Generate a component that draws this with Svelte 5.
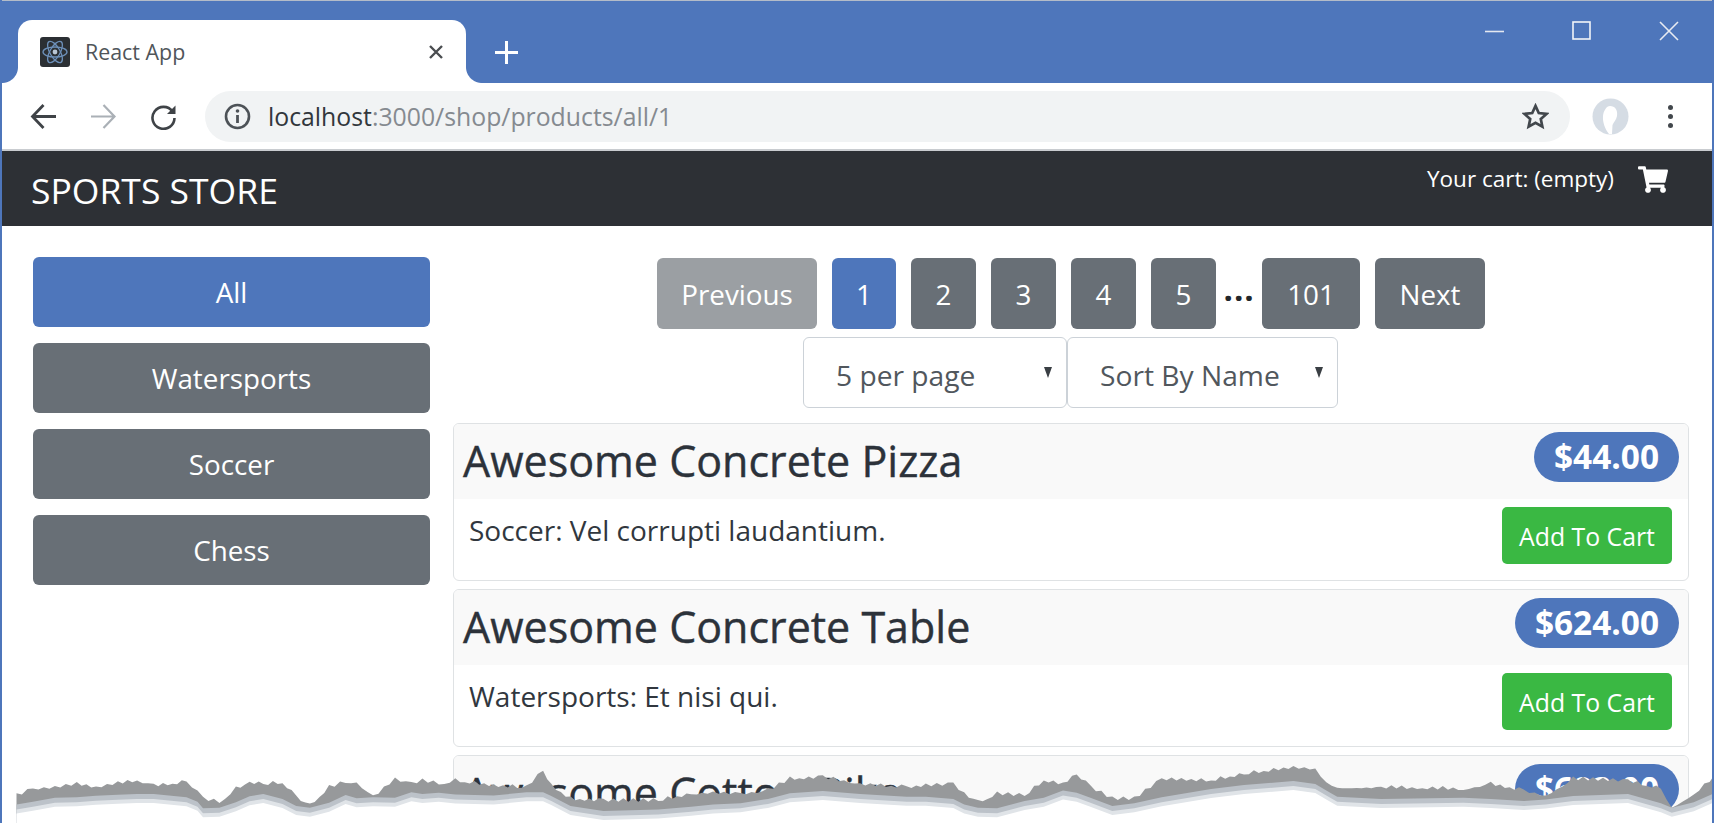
<script>
	const pages = ['1', '2', '3', '4', '5'];
	const categories = ['All', 'Watersports', 'Soccer', 'Chess'];
	const products = [
		{ name: 'Awesome Concrete Pizza', price: '$44.00', text: 'Soccer: Vel corrupti laudantium.' },
		{ name: 'Awesome Concrete Table', price: '$624.00', text: 'Watersports: Et nisi qui.' },
		{ name: 'Awesome Cotton Bike', price: '$683.00', text: 'Chess: Aut quia.' }
	];

	// torn paper edge, traced off the reference
	const left = [[30,230],[60,210],[100,205],[140,195],[175,205],[215,192],[250,185],[280,200],[340,190],[360,215],[370,240],[400,250],[430,210],[455,190],[480,197],[515,190],[540,235],[565,260],[600,205],[630,190],[650,190],[680,235],[720,180],[750,195],[770,185],[800,195],[830,185],[900,200],[960,205],[990,155],[1005,200],[1040,240],[1100,245],[1200,245],[1260,225],[1300,220],[1350,225],[1400,215],[1440,180],[1500,175],[1568,195]];
	const right = [[85,205],[120,200],[170,195],[190,225],[215,250],[250,225],[300,230],[335,185],[370,195],[395,165],[420,205],[460,240],[500,240],[550,180],[640,185],[700,165],[790,145],[830,150],[850,190],[870,205],[950,205],[1100,210],[1150,195],[1210,215],[1250,230],[1300,180],[1400,185],[1460,210],[1480,265],[1520,225],[1568,160]];
	const edge = [
		...left.map(([x, y]) => [x / 1.823, 720 + y / 3]),
		...right.map(([x, y]) => [860 + x / 1.823, 720 + y / 3])
	];

	function smooth(i) {
		const a = edge[Math.max(i - 1, 0)][1];
		const b = edge[Math.min(i + 1, edge.length - 1)][1];
		return (a + edge[i][1] + b) / 3;
	}

	// smoothed lower edge of the shadow
	function lower(offset) {
		const pts = edge.map(([x], i) => `${x.toFixed(1)},${(smooth(i) + offset).toFixed(1)}`);
		const lastX = edge[edge.length - 1][0];
		return `${pts.join(' ')} ${lastX},823 ${edge[0][0]},823`;
	}

	// upper edge with small teeth on it
	function jagged() {
		const pts = [];
		edge.forEach(([x, y], i) => {
			const next = edge[i + 1];
			if (!next) return pts.push(`${x.toFixed(1)},${y.toFixed(1)}`);
			const steps = Math.max(1, Math.round((next[0] - x) / 5));
			for (let s = 0; s < steps; s++) {
				const t = s / steps;
				const px = x + (next[0] - x) * t;
				const tooth = s % 2 ? 0 : Math.abs(Math.sin(px * 12.9)) * 3.5;
				pts.push(`${px.toFixed(1)},${(y + (next[1] - y) * t - tooth).toFixed(1)}`);
			}
		});
		const lastX = edge[edge.length - 1][0];
		return `${pts.join(' ')} ${lastX},823 ${edge[0][0]},823`;
	}
</script>

<div class="window">
	<div class="tabstrip">
		<div class="tab">
			<svg class="favicon" viewBox="0 0 30 30">
				<rect width="30" height="30" rx="3" fill="#2b2f33" />
				<g fill="none" stroke="#6c8fb8" stroke-width="1.3">
					<ellipse cx="15" cy="15" rx="12" ry="5" />
					<ellipse cx="15" cy="15" rx="12" ry="5" transform="rotate(60 15 15)" />
					<ellipse cx="15" cy="15" rx="12" ry="5" transform="rotate(120 15 15)" />
				</g>
				<circle cx="15" cy="15" r="2.4" fill="#b9c6d4" />
			</svg>
			<span class="tab-title">React App</span>
			<svg class="tab-close" viewBox="0 0 16 16"><path d="M2 2l12 12M14 2L2 14" stroke="#4a4d50" stroke-width="2.4" /></svg>
		</div>
		<svg class="newtab" viewBox="0 0 23 23"><path d="M11.5 0v23M0 11.5h23" stroke="#fff" stroke-width="3" /></svg>
		<div class="winctl">
			<svg viewBox="0 0 20 20"><path d="M0 10.5h19" stroke="#e4e8f0" stroke-width="1.6" /></svg>
			<svg viewBox="0 0 20 20"><rect x="1" y="1" width="17" height="17" fill="none" stroke="#f2f4f8" stroke-width="1.6" /></svg>
			<svg viewBox="0 0 20 20"><path d="M1 1l18 18M19 1L1 19" stroke="#e8ebf2" stroke-width="1.6" /></svg>
		</div>
	</div>

	<div class="toolbar">
		<svg class="navicon" viewBox="0 0 27 27"><path d="M26 13.5H3M13.5 2L2.5 13.5 13.5 25" fill="none" stroke="#3f4347" stroke-width="2.8" /></svg>
		<svg class="navicon" viewBox="0 0 27 27"><path d="M1 13.5h23M13.5 2l11 11.5L13.5 25" fill="none" stroke="#aab0b6" stroke-width="2.2" /></svg>
		<svg class="navicon" viewBox="0 0 27 27">
			<path d="M22.5 8.500A11 11 0 1 0 24.5 15" fill="none" stroke="#3f4347" stroke-width="2.6" />
			<path d="M25.500 2.500v8.500h-8.500z" fill="#3f4347" />
		</svg>
		<div class="omnibox">
			<svg class="info" viewBox="0 0 27 27">
				<circle cx="13.5" cy="13.5" r="11.5" fill="none" stroke="#4d5257" stroke-width="2.6" />
				<path d="M13.5 12v8" stroke="#4d5257" stroke-width="2.8" />
				<circle cx="13.5" cy="8" r="1.8" fill="#4d5257" />
			</svg>
			<span class="url"><span class="host">localhost</span>:3000/shop/products/all/1</span>
			<svg class="star" viewBox="0 0 24 24"><path d="M12 2.6l2.9 6.3 6.9.8-5.1 4.6 1.4 6.8-6.1-3.4-6.1 3.4 1.4-6.8L2.2 9.7l6.9-.8z" fill="none" stroke="#42474c" stroke-width="2.4" /></svg>
		</div>
		<svg class="avatar" viewBox="0 0 37 37">
			<circle cx="18.5" cy="18.5" r="18" fill="#d5dce4" />
			<path d="M18 8c5 0 8 4 7 10-.7 4-3.500 6-4.500 9l-.5 9h-3C13 31 10.500 24 11 18c.4-5 3.500-10 7-10z" fill="#fff" />
		</svg>
		<div class="dots"><i></i><i></i><i></i></div>
	</div>

	<header class="navbar">
		<span class="brand">SPORTS STORE</span>
		<div class="cart">
			<span>Your cart: (empty)</span>
			<svg viewBox="0 0 576 512"><path fill="#fff" d="M528.12 301.319l47.273-208C578.806 78.301 567.391 64 551.99 64H159.208l-9.166-44.81C147.758 8.021 137.93 0 126.529 0H24C10.745 0 0 10.745 0 24v16c0 13.255 10.745 24 24 24h69.883l70.248 343.435C147.325 417.1 136 435.222 136 456c0 30.928 25.072 56 56 56s56-25.072 56-56c0-15.674-6.447-29.835-16.824-40h209.647C430.447 426.165 424 440.326 424 456c0 30.928 25.072 56 56 56s56-25.072 56-56c0-22.172-12.888-41.332-31.579-50.405l5.517-24.276c3.413-15.018-8.002-29.319-23.403-29.319H218.117l-6.545-32h293.145c11.206 0 20.92-7.754 23.403-18.681z" /></svg>
		</div>
	</header>

	<main class="page">
		<nav class="sidebar">
			{#each categories as cat, i}
				<button type="button" class="btn block" class:primary={i === 0}>{cat}</button>
			{/each}
		</nav>

		<section class="content">
			<div class="pager">
				<button type="button" class="btn faded">Previous</button>
				{#each pages as p, i}
					<button type="button" class="btn num" class:primary={i === 0}>{p}</button>
				{/each}
				<span class="gap">...</span>
				<button type="button" class="btn wide">101</button>
				<button type="button" class="btn next">Next</button>
			</div>

			<div class="selects">
				<div class="select per">
					<span>5 per page</span>
					<svg viewBox="0 0 8 11"><path d="M0 0h8L4 11z" fill="#3a3f44" /></svg>
				</div>
				<div class="select sort">
					<span>Sort By Name</span>
					<svg viewBox="0 0 8 11"><path d="M0 0h8L4 11z" fill="#3a3f44" /></svg>
				</div>
			</div>

			{#each products as item}
				<article class="card">
					<div class="card-head">
						<h4>{item.name}</h4>
						<span class="price">{item.price}</span>
					</div>
					<div class="card-body">
						<p>{item.text}</p>
						<button type="button" class="add">Add To Cart</button>
					</div>
				</article>
			{/each}
		</section>
	</main>

	<svg class="torn" viewBox="0 0 1714 823" width="1714" height="823">
		<polygon points={jagged()} fill="#97999b" />
		<polygon points={lower(10)} fill="#bcc2c9" />
		<polygon points={lower(15)} fill="#e0e4e8" />
		<polygon points={lower(19)} fill="#ffffff" />
	</svg>
</div>

<style>
	:global(body) {
		margin: 0;
		background: #fff;
	}
	.window {
		position: relative;
		width: 1714px;
		height: 823px;
		overflow: hidden;
		box-sizing: border-box;
		border-left: 2px solid #4e76bb;
		border-right: 2px solid #4e76bb;
		font-family: 'Open Sans', 'Noto Sans', sans-serif;
		color: #2c323a;
		background: #fff;
	}
	.tabstrip {
		display: flex;
		align-items: flex-start;
		height: 83px;
		box-sizing: border-box;
		margin: 0 -2px;
		padding: 19px 0 0 18px;
		background: #4e76bb;
		border-top: 1px solid #b4bcc8;
	}
	.tab {
		position: relative;
		display: flex;
		align-items: center;
		box-sizing: border-box;
		width: 448px;
		height: 63px;
		padding: 0 22px 0 22px;
		background: #fff;
		border-radius: 14px 14px 0 0;
	}
	.tab::before,
	.tab::after {
		content: '';
		position: absolute;
		bottom: 0;
		width: 16px;
		height: 16px;
	}
	.tab::before {
		left: -16px;
		background: radial-gradient(circle at 0 0, #4e76bb 15.5px, #fff 16.5px);
	}
	.tab::after {
		right: -16px;
		background: radial-gradient(circle at 100% 0, #4e76bb 15.5px, #fff 16.5px);
	}
	.favicon {
		width: 30px;
		height: 30px;
		flex: none;
	}
	.tab-title {
		margin-left: 15px;
		font-size: 21.4px;
		color: #50555a;
	}
	.tab-close {
		width: 16px;
		height: 16px;
		margin-left: auto;
	}
	.newtab {
		width: 23px;
		height: 23px;
		margin: 21px 0 0 29px;
	}
	.winctl {
		display: flex;
		gap: 67px;
		margin: 1px 0 0 auto;
		padding-right: 35px;
	}
	.winctl svg {
		width: 20px;
		height: 20px;
	}
	.toolbar {
		display: flex;
		align-items: center;
		height: 68px;
		box-sizing: border-box;
		padding-left: 28px;
		border-bottom: 2px solid #c9ccd0;
	}
	.navicon {
		width: 27px;
		height: 27px;
		margin-right: 33px;
	}
	.omnibox {
		display: flex;
		align-items: center;
		width: 1365px;
		height: 51px;
		margin-left: -5px;
		padding: 0 21px 0 19px;
		box-sizing: border-box;
		border-radius: 26px;
		background: #f1f3f4;
	}
	.info {
		width: 27px;
		height: 27px;
	}
	.url {
		margin-left: 17px;
		font-size: 24.8px;
		color: #858a90;
	}
	.host {
		color: #32373c;
	}
	.star {
		width: 27px;
		height: 27px;
		margin-left: auto;
	}
	.avatar {
		width: 37px;
		height: 37px;
		margin-left: 22px;
	}
	.dots {
		display: flex;
		flex-direction: column;
		gap: 4px;
		margin-left: 39px;
	}
	.dots i {
		width: 5px;
		height: 5px;
		border-radius: 50%;
		background: #42474c;
	}
	.navbar {
		display: flex;
		align-items: flex-start;
		justify-content: space-between;
		height: 75px;
		box-sizing: border-box;
		padding: 0 44px 0 29px;
		background: #2d3035;
		color: #fff;
	}
	.brand {
		margin-top: 16px;
		font-size: 35.5px;
		line-height: 46px;
	}
	.cart {
		display: flex;
		align-items: center;
		gap: 24px;
		margin-top: 13px;
		font-size: 22.5px;
		line-height: 30px;
	}
	.cart svg {
		width: 30px;
		height: 27px;
	}
	.page {
		display: flex;
		gap: 23px;
		padding: 31px 0 0 31px;
	}
	.sidebar {
		display: flex;
		flex-direction: column;
		gap: 16px;
		width: 397px;
		flex: none;
	}
	.btn {
		height: 70px;
		padding: 0;
		border: 0;
		border-radius: 6px;
		background: #686f76;
		color: #fff;
		font-family: inherit;
		font-size: 27.8px;
	}
	.btn.primary {
		background: #4e76bb;
	}
	.content {
		width: 1236px;
		flex: none;
		padding-top: 1px;
	}
	.pager {
		display: flex;
		justify-content: center;
		gap: 15px;
		height: 71px;
	}
	.pager .btn {
		height: 71px;
	}
	.faded {
		width: 160px;
		background: #9b9fa3;
	}
	.num {
		width: 65px;
	}
	.num.primary {
		width: 64px;
	}
	.wide {
		width: 98px;
	}
	.next {
		width: 110px;
	}
	.gap {
		width: 31px;
		margin: 0 -7.5px;
		font-size: 33px;
		font-weight: 700;
		line-height: 62px;
		letter-spacing: 1px;
		text-align: center;
		color: #23272b;
	}
	.selects {
		display: flex;
		justify-content: center;
		margin: 8px 0 15px;
		padding-right: 1px;
	}
	.select {
		position: relative;
		box-sizing: border-box;
		height: 71px;
		padding: 16px 0 0 32px;
		border: 1px solid #ccd2d8;
		border-radius: 6px;
		font-size: 28.2px;
		line-height: 42px;
		color: #51575d;
	}
	.select.per {
		width: 264px;
	}
	.select.sort {
		width: 271px;
	}
	.select svg {
		position: absolute;
		top: 29px;
		right: 14px;
		width: 8px;
		height: 11px;
	}
	.card {
		box-sizing: border-box;
		height: 158px;
		margin-bottom: 8px;
		border: 1px solid #dfe2e4;
		border-radius: 6px;
		overflow: hidden;
	}
	.card-head {
		display: flex;
		align-items: flex-start;
		justify-content: space-between;
		height: 75px;
		box-sizing: border-box;
		padding: 8px 9px 0 9px;
		background: #f9f9f9;
	}
	h4 {
		margin: 0;
		font-size: 43px;
		font-weight: 500;
		line-height: 58px;
		color: #2c323a;
		-webkit-text-stroke: 0.4px #2c323a;
	}
	.price {
		padding: 0 20px;
		height: 50px;
		border-radius: 25px;
		background: #4e76bb;
		color: #fff;
		font-size: 33.4px;
		font-weight: 700;
		line-height: 48px;
	}
	.card-body {
		display: flex;
		align-items: flex-start;
		justify-content: space-between;
		padding: 8px 16px 0 15px;
	}
	.card-body p {
		margin: 0;
		font-size: 28px;
		line-height: 46px;
		color: #31373e;
	}
	.add {
		width: 170px;
		height: 57px;
		padding: 0;
		border: 0;
		border-radius: 5px;
		background: #3ab843;
		color: #fff;
		font-family: inherit;
		font-size: 24.8px;
	}
	.torn {
		position: absolute;
		left: -2px;
		top: 0;
		pointer-events: none;
	}
</style>
